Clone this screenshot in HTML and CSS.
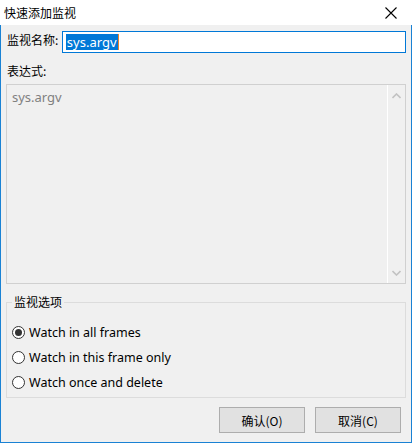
FILE: index.html
```html
<!DOCTYPE html>
<html>
<head>
<meta charset="utf-8">
<link rel="stylesheet" href="styles.css">
</head>
<body>
<div class="window">
  <div class="titlebar">
    <span class="title">快速添加监视</span>
    <svg class="close" width="12" height="12" viewBox="0 0 12 12"><path d="M0.5 0.5 L11.5 11.5 M11.5 0.5 L0.5 11.5" stroke="#000" stroke-width="1.1" fill="none"/></svg>
  </div>
  <div class="content">
    <div class="name-row">
      <span class="label">监视名称:</span>
      <div class="input"><span class="sel">sys.argv</span><span class="caret"></span></div>
    </div>
    <div class="expr-label label">表达式:</div>
    <div class="expr-box">
      <div class="expr-text">sys.argv</div>
      <div class="scrollbar">
        <svg class="arrow" width="9" height="6" viewBox="0 0 9 6"><path d="M0.5 5 L4.5 1 L8.5 5" stroke="#c2c2c2" stroke-width="1.6" fill="none"/></svg>
        <svg class="arrow" width="9" height="6" viewBox="0 0 9 6"><path d="M0.5 1 L4.5 5 L8.5 1" stroke="#c2c2c2" stroke-width="1.6" fill="none"/></svg>
      </div>
    </div>
    <fieldset class="group">
      <legend>监视选项</legend>
      <label class="radio"><span class="dot checked"></span>Watch in all frames</label>
      <label class="radio"><span class="dot"></span>Watch in this frame only</label>
      <label class="radio"><span class="dot"></span>Watch once and delete</label>
    </fieldset>
    <div class="buttons">
      <button class="btn">确认(O)</button>
      <button class="btn">取消(C)</button>
    </div>
  </div>
</div>
</body>
</html>
```

FILE: styles.css
```css
* { box-sizing: border-box; }
html, body { margin: 0; padding: 0; }
body {
  width: 412px;
  height: 443px;
  background: #ffffff;
  font-family: "Noto Sans", "Noto Sans CJK SC", sans-serif;
  font-size: 12px;
  color: #000;
  overflow: hidden;
}
.window {
  width: 412px;
  height: 443px;
  display: flex;
  flex-direction: column;
}
.titlebar {
  height: 25px;
  background: #fff;
  display: flex;
  align-items: center;
  justify-content: space-between;
  padding: 0 15px 0 4px;
  flex: none;
}
.title {
  font-size: 12px;
  line-height: 16px;
  font-family: "Noto Sans CJK SC", sans-serif;
}
.close { display: block; margin-top: 1px; }
.content {
  flex: 1;
  background: #f0f0f0;
  border-left: 1px solid #1a82d4;
  border-right: 1px solid #1a82d4;
  border-bottom: 1px solid #1a82d4;
  padding: 6px 5px 0 5px;
  display: flex;
  flex-direction: column;
}
.label {
  font-family: "Noto Sans CJK SC", sans-serif;
  font-size: 12px;
  line-height: 16px;
}
.name-row {
  display: flex;
  align-items: center;
  height: 22px;
}
.name-row .label { width: 56px; padding-left: 1px; margin-top: -4px; }
.input {
  width: 345px;
  height: 22px;
  border: 1px solid #0078d7;
  background: #fff;
  display: flex;
  align-items: center;
  padding-left: 3px;
}
.sel {
  background: #0078d7;
  color: #fff;
  font-size: 13px;
  line-height: 16px;
  padding: 0 1px;
}
.caret {
  width: 1px;
  height: 16px;
  background: #e8822a;
}
.expr-label {
  margin-top: 10px;
  padding-left: 1px;
}
.expr-box {
  margin-top: 5px;
  height: 200px;
  border: 1px solid #d0d0d0;
  background: #f0f0f0;
  display: flex;
}
.expr-text {
  flex: 1;
  color: #808080;
  font-size: 13px;
  line-height: 16px;
  padding: 4px 5px;
}
.scrollbar {
  width: 18px;
  border-left: 1px solid #ffffff;
  display: flex;
  flex-direction: column;
  justify-content: space-between;
  align-items: center;
  padding: 8px 0 7px 0;
}
.arrow { display: block; }
.group {
  margin: 10px 0 0 0;
  padding: 10px 0 0 5px;
  border: 1px solid #dcdcdc;
  height: 104px;
}
.group legend {
  font-family: "Noto Sans CJK SC", sans-serif;
  font-size: 12px;
  line-height: 16px;
  padding: 0 2px;
  margin-left: 0;
}
.radio {
  display: flex;
  align-items: center;
  height: 25px;
  font-size: 12.5px;
  line-height: 16px;
}
.dot {
  width: 13px;
  height: 13px;
  border: 1px solid #333;
  border-radius: 50%;
  background: #fff;
  margin-right: 4px;
  display: flex;
  align-items: center;
  justify-content: center;
}
.dot.checked::after {
  content: "";
  width: 7px;
  height: 7px;
  border-radius: 50%;
  background: #333;
}
.buttons {
  display: flex;
  justify-content: flex-end;
  gap: 10px;
  margin-top: 9px;
  padding-right: 5px;
}
.btn {
  width: 86px;
  height: 26px;
  background: #e1e1e1;
  border: 1px solid #adadad;
  font-family: "Noto Sans CJK SC", sans-serif;
  font-size: 12px;
  color: #000;
  padding: 0;
  margin: 0;
}
```
